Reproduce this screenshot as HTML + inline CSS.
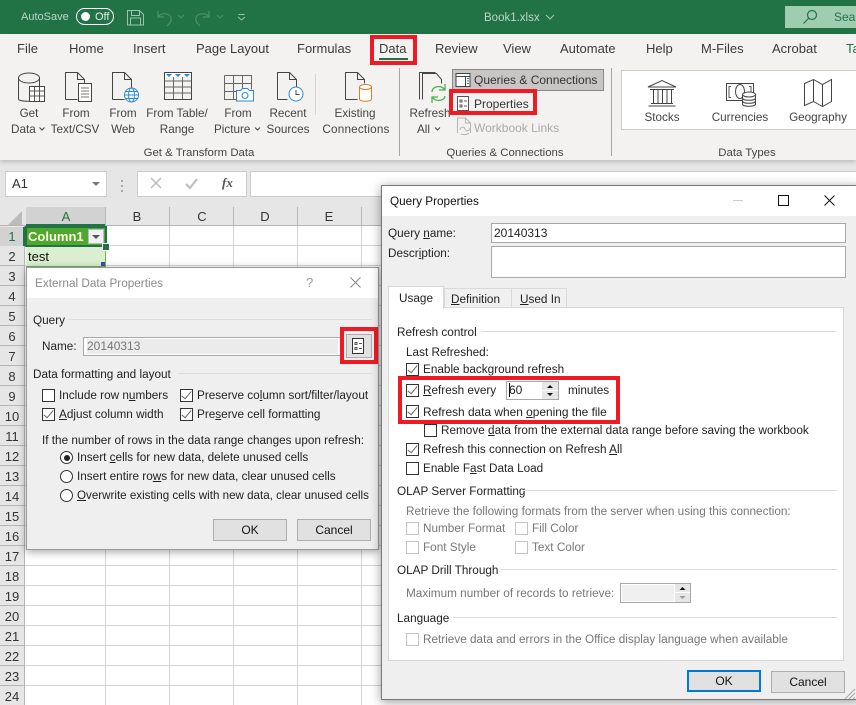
<!DOCTYPE html>
<html><head><meta charset="utf-8"><style>
html,body{margin:0;padding:0;width:856px;height:705px;overflow:hidden;background:#e6e6e6}
body{position:relative;font-family:"Liberation Sans",sans-serif;font-size:12px;color:#222}
.a,.t,.c,.cb,.rd,.btn,.ln{position:absolute;box-sizing:border-box}
.t{white-space:nowrap;line-height:16px;height:16px}
.c{white-space:nowrap;line-height:16px;height:16px;transform:translateX(-50%)}
.tab{font-size:13px;color:#3b3a39;top:41px}
.rb{color:#444;font-size:11.7px;margin-top:1px}
.gl{color:#444;font-size:11.4px;margin-top:1px}
.rn{color:#333;font-size:13px;left:12px}
.ch{color:#333;font-size:13px;top:209px}
.cb{width:13px;height:13px;border:1px solid #333;background:#fff}
.cb.k::after{content:"";position:absolute;left:3px;top:-1px;width:4px;height:9px;border:solid #666;border-width:0 1.3px 1.3px 0;transform:rotate(40deg)}
.cb.off{border-color:#c4c4c4}
.rd{width:13px;height:13px;border:1px solid #333;border-radius:50%;background:#fff}
.rd.k::after{content:"";position:absolute;left:2.500px;top:2.500px;width:6px;height:6px;border-radius:50%;background:#222}
.btn{background:#e1e1e1;border:1px solid #adadad;text-align:center;line-height:20px;color:#111;font-size:12px}
.ln{height:1px;background:#dcdcdc}
.g{color:#777}
.rbx{position:absolute;box-sizing:border-box;border:4px solid #ed1c24}
.d{font-size:11.75px;margin-top:1px}
u{text-underline-offset:1px}
</style></head><body>

<!-- title bar -->
<div class="a" style="left:0;top:0;width:856px;height:34px;background:#217346"></div>
<div class="t" style="left:21px;top:9px;color:#bcd6c6;font-size:11px">AutoSave</div>
<div class="a" style="left:76px;top:8px;width:38px;height:17px;border:1.3px solid #fff;border-radius:9px"></div>
<div class="a" style="left:81px;top:12px;width:9px;height:9px;border-radius:50%;background:#fff"></div>
<div class="t" style="left:95px;top:9px;color:#e4efe8;font-size:11px">Off</div>
<svg class="a" style="left:0;top:0" width="856" height="34" fill="none">
<path d="M127.500 10.500h12l4 4v10.500h-16zM131.500 10.500v5h8v-5M130.500 25v-7h10v7" stroke="#9cc4ac"/>
<path d="M158 11v6h6M158 17c3-5 12-4 13 1 1 4-2 6-4 8" stroke="#4f9069" stroke-width="1.2"/>
<path d="M178 15l3 3 3-3" stroke="#4f9069"/>
<path d="M209 11v6h-6M209 17c-3-5-12-4-13 1-1 4 2 6 4 8" stroke="#4f9069" stroke-width="1.2"/>
<path d="M217 15l3 3 3-3" stroke="#4f9069"/>
<path d="M238.500 14.500h6M238 17l3.500 3 3.500-3" stroke="#9cc4ac"/>
<path d="M546 15l4 4 4-4" stroke="#a5cbb4"/>
</svg>
<div class="t" style="left:484px;top:10px;color:#bcd6c6;font-size:11.500px">Book1.xlsx</div>
<div class="a" style="left:785px;top:6px;width:71px;height:22px;background:#9fcdb0"></div>
<svg class="a" style="left:800px;top:8px" width="20" height="18" fill="none" stroke="#217346" stroke-width="1.2"><circle cx="12" cy="7" r="4.500"/><path d="M8.500 10.500l-5 5"/></svg>
<div class="t" style="left:834px;top:9px;color:#217346;font-size:12px">Sear</div>

<!-- tabs + ribbon -->
<div class="a" style="left:0;top:34px;width:856px;height:126px;background:#f3f2f1;box-shadow:0 2px 4px rgba(0,0,0,.18)"></div>
<div class="t tab" style="left:17px">File</div>
<div class="t tab" style="left:69px">Home</div>
<div class="t tab" style="left:133px">Insert</div>
<div class="t tab" style="left:196px">Page Layout</div>
<div class="t tab" style="left:297px">Formulas</div>
<div class="t tab" style="left:379px">Data</div>
<div class="a" style="left:379px;top:58px;width:29px;height:2px;background:#217346"></div>
<div class="t tab" style="left:435px">Review</div>
<div class="t tab" style="left:503px">View</div>
<div class="t tab" style="left:560px">Automate</div>
<div class="t tab" style="left:646px">Help</div>
<div class="t tab" style="left:701px">M-Files</div>
<div class="t tab" style="left:772px">Acrobat</div>
<div class="t tab" style="left:846px;color:#217346">Ta</div>

<svg class="a" style="left:0;top:0" width="856" height="165" fill="none" stroke="#444" stroke-width="1">
<!-- get data -->
<path d="M18.500 78v21c0 3 21 3 21 0V78"/><ellipse cx="29" cy="78" rx="10.500" ry="5"/>
<rect x="29.500" y="86.500" width="15" height="15" fill="#fff"/><path d="M29.500 91h15M29.500 96h15M34.500 87v14M39.500 87v14" stroke="#555"/>
<!-- text -->
<path d="M65.500 99.500v-27h12l7 7v4M77.500 72.500v7h7M65.500 99.500h12"/><rect x="78.500" y="83.500" width="13" height="18" fill="#fff"/><path d="M81 88h8M81 91h8M81 94h8M81 97h8" stroke="#777"/>
<!-- web -->
<path d="M112.500 99.500v-27h12l7 7v9M124.500 72.500v7h7M112.500 99.500h12"/>
<g stroke="#2b88d8"><circle cx="131.500" cy="95" r="7" fill="#fff"/><ellipse cx="131.500" cy="95" rx="3" ry="7"/><path d="M124.500 95h14M125.500 91.500h12M125.500 98.500h12"/></g>
<!-- table -->
<rect x="164.500" y="72.500" width="27" height="27"/><path d="M164.500 81h27M164.500 87h27M164.500 93h27M173.500 77v22M182.500 77v22" stroke="#666"/>
<path d="M165 73h26v4h-26z" fill="#fff" stroke="none"/><path d="M166 74h6l-3 3zM175 74h6l-3 3zM184 74h6l-3 3z" fill="#2b88d8" stroke="none"/>
<!-- picture -->
<path d="M224.500 75.500h27v14M224.500 75.500v24h12M224.500 83.500h27M224.500 91.500h12M233.500 75.500v24M242.500 75.500v13" stroke="#666"/>
<path d="M236.500 90.500h4l2-2h5l2 2h4v10.500h-17z" fill="#fff" stroke="#2b88d8"/><circle cx="245" cy="95.500" r="3" stroke="#2b88d8"/>
<!-- recent -->
<path d="M277.500 99.500v-27h12l7 7v8M289.500 72.500v7h7M277.500 99.500h10"/>
<circle cx="296" cy="94" r="7" fill="#fff" stroke="#2b88d8"/><path d="M296 90v4.500h3.500" stroke="#444"/>
<path d="M315.500 74v41" stroke="#d8d6d4"/>
<!-- existing -->
<path d="M345.500 99.500v-27h12l7 7v4M357.500 72.500v7h7M345.500 99.500h12"/>
<path d="M359.500 87v12c0 3 12 3 12 0V87" fill="#fff" stroke="#e07b24"/><ellipse cx="365.500" cy="87" rx="6" ry="2.500" fill="#fff" stroke="#e07b24"/>
<path d="M399.500 68v88" stroke="#a8a6a4"/>
<!-- refresh -->
<path d="M419.500 99.500v-27h16M422.500 97.500v-25M422.500 99.500v-26h14l5 6v4" stroke="#444"/>
<path d="M432 92c0-5 7-7 11-4l2 2M445 84v6h-6M445 96c0 4-7 6-11 3l-2-2M432 103v-6h6" stroke="#4caf50" stroke-width="1.300"/>
<!-- chevrons -->
<path d="M39.500 127.500l2.500 2.500 2.500-2.500M255 127.500l2.500 2.500 2.500-2.500M435 127.500l2.500 2.500 2.500-2.500" stroke="#444"/>
<!-- queries btn -->
<rect x="452.500" y="69.500" width="151" height="21" fill="#c8c6c4" stroke="#8a8886"/>
<rect x="456" y="73.500" width="14" height="13" fill="#fff" stroke="#444"/><path d="M456 76.500h14M465.500 76.500v10" stroke="#444"/><path d="M467 78.500h2M467 81h2M467 83.500h2" stroke="#2b79c2"/>
<!-- properties -->
<rect x="457.500" y="96.500" width="11" height="14" fill="#fff" stroke="#555"/><path d="M460 100h2v2h-2zM460 105h2v2h-2zM464 101h3M464 106h3" stroke="#555"/>
<!-- links -->
<path d="M457.500 133v-15h8l5 5v10M465.500 118v5h5" stroke="#b5b5b5"/><path d="M460 130c0-3 4-4 5-1s5 2 5-1M461 134c2 1 6 1 8-1" stroke="#b5b5b5"/>
<path d="M611.500 68v88" stroke="#a8a6a4"/>
<rect x="621.500" y="70.500" width="240" height="59" fill="#fff" stroke="#cfcdcb"/>
<!-- stocks -->
<path d="M648 87l14-6.500 14 6.500zM650 89.500h24M651 103.500h22M648.500 106h27M653.500 90v13M658 90v13M662.500 90v13M667 90v13M671.500 90v13"/>
<!-- currencies -->
<rect x="726.500" y="83.500" width="27" height="17"/><path d="M731 86.500h-2v11h2M749 86.500h2v6" stroke="#555"/><ellipse cx="740" cy="91.500" rx="4.500" ry="7"/>
<path d="M742.500 95v9c0 3 13 3 13 0v-9" fill="#fff"/><ellipse cx="749" cy="94.500" rx="6.500" ry="2.500" fill="#fff"/><path d="M742.500 98c0 3 13 3 13 0M742.500 101c0 3 13 3 13 0"/>
<!-- geo -->
<path d="M804.500 83.500l9-4 9 5 9-5v22l-9 5-9-5-9 4zM813.500 79.500v22M822.500 84.500v22"/>
</svg>

<div class="c rb" style="left:29px;top:105px">Get</div>
<div class="t rb" style="left:11px;top:121px">Data</div>
<div class="c rb" style="left:76px;top:105px">From</div>
<div class="c rb" style="left:75px;top:121px">Text/CSV</div>
<div class="c rb" style="left:123px;top:105px">From</div>
<div class="c rb" style="left:123px;top:121px">Web</div>
<div class="c rb" style="left:177px;top:105px">From Table/</div>
<div class="c rb" style="left:177px;top:121px">Range</div>
<div class="c rb" style="left:238px;top:105px">From</div>
<div class="t rb" style="left:214px;top:121px">Picture</div>
<div class="c rb" style="left:288px;top:105px">Recent</div>
<div class="c rb" style="left:288px;top:121px">Sources</div>
<div class="c rb" style="left:355px;top:105px">Existing</div>
<div class="c rb" style="left:356px;top:121px;letter-spacing:.2px">Connections</div>
<div class="c gl" style="left:199px;top:144px">Get &amp; Transform Data</div>
<div class="c rb" style="left:430px;top:105px">Refresh</div>
<div class="t rb" style="left:417px;top:121px">All</div>
<div class="t rb" style="left:474px;top:72px;color:#333;font-size:12px;margin-top:0">Queries &amp; Connections</div>
<div class="t rb" style="left:474px;top:96px;color:#333;font-size:12px;margin-top:0">Properties</div>
<div class="t rb" style="left:474px;top:120px;color:#aaa;font-size:12px;margin-top:0">Workbook Links</div>
<div class="c gl" style="left:505px;top:144px">Queries &amp; Connections</div>
<div class="c gl" style="left:747px;top:144px">Data Types</div>
<div class="c rb" style="left:662px;top:109px">Stocks</div>
<div class="c rb" style="left:740px;top:109px">Currencies</div>
<div class="c rb" style="left:818px;top:109px">Geography</div>

<div class="rbx" style="left:370px;top:35px;width:47px;height:30px"></div>
<div class="rbx" style="left:449px;top:89px;width:88px;height:26px"></div>

<!-- formula bar -->
<div class="a" style="left:5px;top:171px;width:102px;height:26px;background:#fff;border:1px solid #ccc"></div>
<div class="t" style="left:12px;top:176px;font-size:13px;color:#333">A1</div>
<svg class="a" style="left:0;top:165px" width="260" height="35" fill="none">
<path d="M92 17h8l-4 4z" fill="#777"/>
<path d="M122 15v2M122 20v2M122 25v2" stroke="#aaa" stroke-width="2"/>
</svg>
<div class="a" style="left:137px;top:171px;width:110px;height:26px;background:#fff;border:1px solid #ccc"></div>
<svg class="a" style="left:137px;top:171px" width="110" height="26" fill="none">
<path d="M14 7l10 10M24 7l-10 10" stroke="#bbb" stroke-width="1.500"/>
<path d="M49 13l4 4 7-9" stroke="#bbb" stroke-width="2"/>
</svg>
<div class="t" style="left:222px;top:175px;font-family:'Liberation Serif',serif;font-style:italic;font-weight:bold;font-size:13px;color:#555">fx</div>
<div class="a" style="left:250px;top:171px;width:620px;height:26px;background:#fff;border:1px solid #ccc"></div>

<!-- sheet -->
<div class="a" style="left:0;top:207px;width:856px;height:19px;background:#e6e6e6;border-bottom:1px solid #b5b5b5"></div>
<div class="a" style="left:0;top:226px;width:25px;height:479px;background:#e6e6e6;background-image:repeating-linear-gradient(to bottom,transparent 0,transparent 19px,#b5b5b5 19px,#b5b5b5 20px);border-right:1px solid #b5b5b5"></div>
<div class="a" style="left:25px;top:226px;width:831px;height:479px;background-color:#fff;background-image:repeating-linear-gradient(to bottom,transparent 0,transparent 19px,#d4d4d4 19px,#d4d4d4 20px),linear-gradient(#d4d4d4,#d4d4d4),linear-gradient(#d4d4d4,#d4d4d4),linear-gradient(#d4d4d4,#d4d4d4),linear-gradient(#d4d4d4,#d4d4d4),linear-gradient(#d4d4d4,#d4d4d4);background-size:auto,1px 100%,1px 100%,1px 100%,1px 100%,1px 100%;background-position:0 0,80px 0,144px 0,208px 0,272px 0,336px 0;background-repeat:repeat,no-repeat,no-repeat,no-repeat,no-repeat,no-repeat"></div>
<svg class="a" style="left:0;top:207px" width="26" height="20"><path d="M22 4v14H8z" fill="#bbb"/></svg>
<div class="a" style="left:26px;top:207px;width:80px;height:19px;background:#d2d2d2;border-bottom:2px solid #217346"></div>
<div class="a" style="left:0;top:227px;width:25px;height:19px;background:#d2d2d2;border-right:2px solid #217346"></div>
<div class="a" style="left:105px;top:207px;width:1px;height:19px;background:#b5b5b5"></div>
<div class="a" style="left:169px;top:207px;width:1px;height:19px;background:#b5b5b5"></div>
<div class="a" style="left:233px;top:207px;width:1px;height:19px;background:#b5b5b5"></div>
<div class="a" style="left:297px;top:207px;width:1px;height:19px;background:#b5b5b5"></div>
<div class="a" style="left:361px;top:207px;width:1px;height:19px;background:#b5b5b5"></div>
<div class="c ch" style="left:66px;color:#217346">A</div>
<div class="c ch" style="left:137px">B</div>
<div class="c ch" style="left:202px">C</div>
<div class="c ch" style="left:265px">D</div>
<div class="c ch" style="left:329px">E</div>

<div class="c rn" style="top:229px;color:#217346">1</div>
<div class="c rn" style="top:249px">2</div>
<div class="c rn" style="top:269px">3</div>
<div class="c rn" style="top:289px">4</div>
<div class="c rn" style="top:309px">5</div>
<div class="c rn" style="top:329px">6</div>
<div class="c rn" style="top:349px">7</div>
<div class="c rn" style="top:369px">8</div>
<div class="c rn" style="top:389px">9</div>
<div class="c rn" style="top:409px">10</div>
<div class="c rn" style="top:429px">11</div>
<div class="c rn" style="top:449px">12</div>
<div class="c rn" style="top:469px">13</div>
<div class="c rn" style="top:489px">14</div>
<div class="c rn" style="top:509px">15</div>
<div class="c rn" style="top:529px">16</div>
<div class="c rn" style="top:549px">17</div>
<div class="c rn" style="top:569px">18</div>
<div class="c rn" style="top:589px">19</div>
<div class="c rn" style="top:609px">20</div>
<div class="c rn" style="top:629px">21</div>
<div class="c rn" style="top:649px">22</div>
<div class="c rn" style="top:669px">23</div>
<div class="c rn" style="top:689px">24</div>

<!-- cells -->
<div class="a" style="left:26px;top:247px;width:80px;height:20px;background:#d9efcf;border-right:1px solid #6fb35a;border-bottom:1px solid #6fb35a"></div>
<div class="t" style="left:28px;top:249px;font-size:13px;color:#111">test</div>
<div class="a" style="left:101px;top:262px;width:4px;height:4px;background:#3f4fa8"></div>
<div class="a" style="left:26px;top:228px;width:79px;height:17px;background:#4ea72e"></div>
<div class="t" style="left:28px;top:229px;font-size:13px;font-weight:bold;color:#fdfbe0">Column1</div>
<div class="a" style="left:88px;top:229px;width:16px;height:15px;background:#eef0f4;border:1px solid #bbb"></div>
<svg class="a" style="left:88px;top:229px" width="16" height="15"><path d="M4 6h8l-4 4z" fill="#555"/></svg>
<div class="a" style="left:25px;top:226px;width:82px;height:21px;border:2px solid #217346"></div>
<div class="a" style="left:103px;top:244px;width:6px;height:6px;background:#217346;border:1px solid #fff;box-sizing:content-box;margin:-1px"></div>

<!-- dialog 1 -->
<div class="a" style="left:26px;top:267px;width:353px;height:283px;background:#efefef;border:1px solid #9a9a9a;box-shadow:0 2px 8px rgba(0,0,0,.35)"></div>
<div class="a" style="left:27px;top:268px;width:351px;height:30px;background:#fff"></div>
<div class="t d" style="left:35px;top:275px;color:#8a8a8a">External Data Properties</div>
<div class="t" style="left:306px;top:275px;color:#999;font-size:13px">?</div>
<svg class="a" style="left:345px;top:272px" width="20" height="20" fill="none" stroke="#888"><path d="M5.500 5.500l10 10M15.500 5.500l-10 10"/></svg>
<div class="t d" style="left:33px;top:312px">Query</div>
<div class="ln" style="left:68px;top:319px;width:304px"></div>
<div class="t d" style="left:42px;top:338px">Name:</div>
<div class="a" style="left:83px;top:337px;width:258px;height:19px;background:#fff;border:1px solid #a8a8a8"></div>
<div class="a" style="left:87px;top:339px;width:251px;height:15px;background:#ebebeb"></div>
<div class="t" style="left:87px;top:338px;color:#777">20140313</div>
<div class="a" style="left:346px;top:334px;width:26px;height:24px;background:#e1e1e1;border:1px solid #adadad"></div>
<svg class="a" style="left:346px;top:334px" width="26" height="24" fill="none" stroke="#333"><rect x="6.500" y="4.500" width="11" height="15" fill="#fff"/><path d="M9 8.500h2v2h-2zM9 13.500h2v2h-2zM13 9.500h3M13 14.500h3" stroke="#555"/></svg>
<div class="rbx" style="left:340px;top:327px;width:38px;height:37px"></div>
<div class="t d" style="left:33px;top:366px">Data formatting and layout</div>
<div class="ln" style="left:178px;top:373px;width:194px"></div>
<div class="cb" style="left:42px;top:389px"></div>
<div class="t d" style="left:59px;top:387px">Include row n<u>u</u>mbers</div>
<div class="cb k" style="left:180px;top:389px"></div>
<div class="t d" style="left:197px;top:387px">Preserve co<u>l</u>umn sort/filter/layout</div>
<div class="cb k" style="left:42px;top:408px"></div>
<div class="t d" style="left:59px;top:406px"><u>A</u>djust column width</div>
<div class="cb k" style="left:180px;top:408px"></div>
<div class="t d" style="left:197px;top:406px">Pre<u>s</u>erve cell formatting</div>
<div class="t d" style="left:42px;top:432px">If the number of rows in the data range changes upon refresh:</div>
<div class="rd k" style="left:60px;top:451px"></div>
<div class="t d" style="left:77px;top:449px">Insert <u>c</u>ells for new data, delete unused cells</div>
<div class="rd" style="left:60px;top:470px"></div>
<div class="t d" style="left:77px;top:468px">Insert entire ro<u>w</u>s for new data, clear unused cells</div>
<div class="rd" style="left:60px;top:489px"></div>
<div class="t d" style="left:77px;top:487px;font-size:11.6px"><u>O</u>verwrite existing cells with new data, clear unused cells</div>
<div class="btn" style="left:213px;top:519px;width:74px;height:22px">OK</div>
<div class="btn" style="left:297px;top:519px;width:74px;height:22px">Cancel</div>

<!-- dialog 2 -->
<div class="a" style="left:381px;top:185px;width:480px;height:515px;background:#efefef;border:1px solid #777;box-shadow:0 2px 10px rgba(0,0,0,.4)"></div>
<div class="a" style="left:382px;top:186px;width:474px;height:30px;background:#fff"></div>
<div class="t d" style="left:390px;top:193px;color:#111">Query Properties</div>
<div class="a" style="left:733px;top:200px;width:10px;height:1px;background:#ccc"></div>
<div class="a" style="left:778px;top:195px;width:11px;height:11px;border:1px solid #111"></div>
<svg class="a" style="left:822px;top:193px" width="14" height="14" fill="none" stroke="#111"><path d="M2.500 2.500l10 10M12.500 2.500l-10 10"/></svg>
<div class="t d" style="left:388px;top:225px">Query <u>n</u>ame:</div>
<div class="t d" style="left:388px;top:245px">Descr<u>i</u>ption:</div>
<div class="a" style="left:491px;top:223px;width:355px;height:20px;background:#fff;border:1px solid #a8a8a8"></div>
<div class="t" style="left:494px;top:225px;color:#222">20140313</div>
<div class="a" style="left:491px;top:246px;width:355px;height:32px;background:#fff;border:1px solid #a8a8a8"></div>
<div class="a" style="left:388px;top:307px;width:456px;height:354px;background:#fff;border:1px solid #d9d9d9"></div>
<div class="a" style="left:444px;top:288px;width:68px;height:20px;background:#f0f0f0;border:1px solid #d9d9d9"></div>
<div class="a" style="left:511px;top:288px;width:56px;height:20px;background:#f0f0f0;border:1px solid #d9d9d9"></div>
<div class="a" style="left:388px;top:286px;width:56px;height:23px;background:#fff;border:1px solid #d9d9d9;border-bottom:none"></div>
<div class="t d" style="left:399px;top:290px">Usa<u>g</u>e</div>
<div class="t d" style="left:451px;top:291px"><u>D</u>efinition</div>
<div class="t d" style="left:520px;top:291px"><u>U</u>sed In</div>

<div class="t d" style="left:397px;top:324px">Refresh control</div>
<div class="ln" style="left:481px;top:331px;width:356px"></div>
<div class="t d" style="left:406px;top:344px">Last Refreshed:</div>
<div class="cb k" style="left:406px;top:363px"></div>
<div class="t d" style="left:423px;top:361px">Enable back<u>g</u>round refresh</div>
<div class="cb k" style="left:406px;top:384px"></div>
<div class="t d" style="left:423px;top:382px"><u>R</u>efresh every</div>
<div class="a" style="left:506px;top:381px;width:53px;height:19px;background:#fff;border:1px solid #a8a8a8"></div>
<div class="t" style="left:509px;top:382px;color:#222">60</div>
<div class="a" style="left:509px;top:383px;width:1px;height:14px;background:#111"></div>
<div class="a" style="left:542px;top:382px;width:16px;height:8px;background:#e6e6e6"></div>
<div class="a" style="left:542px;top:391px;width:16px;height:8px;background:#e6e6e6"></div>
<svg class="a" style="left:542px;top:382px" width="16" height="17"><path d="M5 6h6l-3-3zM5 11h6l-3 3z" fill="#111"/></svg>
<div class="t d" style="left:568px;top:382px">minutes</div>
<div class="cb k" style="left:406px;top:405px"></div>
<div class="t d" style="left:423px;top:403px;font-size:11.9px">Refresh data when <u>o</u>pening the file</div>
<div class="rbx" style="left:398px;top:376px;width:222px;height:48px"></div>
<div class="cb" style="left:424px;top:424px"></div>
<div class="t d" style="left:441px;top:422px">Remove <u>d</u>ata from the external data range before saving the workbook</div>
<div class="cb k" style="left:406px;top:443px"></div>
<div class="t d" style="left:423px;top:441px">Refresh this connection on Refresh <u>A</u>ll</div>
<div class="cb" style="left:406px;top:462px"></div>
<div class="t d" style="left:423px;top:460px">Enable F<u>a</u>st Data Load</div>
<div class="t d" style="left:397px;top:483px">OLAP Server Formatting</div>
<div class="ln" style="left:523px;top:490px;width:314px"></div>
<div class="t d g" style="left:406px;top:503px">Retrieve the following formats from the server when using this connection:</div>
<div class="cb off" style="left:406px;top:522px"></div>
<div class="t d g" style="left:423px;top:520px">Number Format</div>
<div class="cb off" style="left:515px;top:522px"></div>
<div class="t d g" style="left:532px;top:520px">Fill Color</div>
<div class="cb off" style="left:406px;top:541px"></div>
<div class="t d g" style="left:423px;top:539px">Font Style</div>
<div class="cb off" style="left:515px;top:541px"></div>
<div class="t d g" style="left:532px;top:539px">Text Color</div>
<div class="t d" style="left:397px;top:562px">OLAP Drill Through</div>
<div class="ln" style="left:501px;top:569px;width:336px"></div>
<div class="t d g" style="left:406px;top:585px">Maximum number of records to retrieve:</div>
<div class="a" style="left:620px;top:583px;width:71px;height:20px;background:#fff;border:1px solid #a8a8a8"></div>
<div class="a" style="left:622px;top:585px;width:52px;height:16px;background:#f0f0f0"></div>
<div class="a" style="left:675px;top:584px;width:15px;height:8px;background:#e6e6e6"></div>
<div class="a" style="left:675px;top:593px;width:15px;height:9px;background:#e6e6e6"></div>
<svg class="a" style="left:675px;top:584px" width="15" height="18"><path d="M4.500 6h6l-3-3z" fill="#111"/><path d="M4.500 12h6l-3 3z" fill="#999"/></svg>
<div class="t d" style="left:397px;top:610px">Language</div>
<div class="ln" style="left:453px;top:617px;width:384px"></div>
<div class="cb off" style="left:406px;top:633px"></div>
<div class="t d g" style="left:423px;top:631px">Retrieve data and errors in the Office display language when available</div>
<div class="btn" style="left:687px;top:670px;width:74px;height:22px;border:2px solid #0078d7;line-height:18px">OK</div>
<div class="btn" style="left:771px;top:671px;width:74px;height:22px">Cancel</div>
<svg class="a" style="left:842px;top:686px" width="14" height="14" fill="none" stroke="#aaa"><path d="M13 3L3 13M13 7l-6 6M13 11l-2 2"/></svg>

</body></html>
